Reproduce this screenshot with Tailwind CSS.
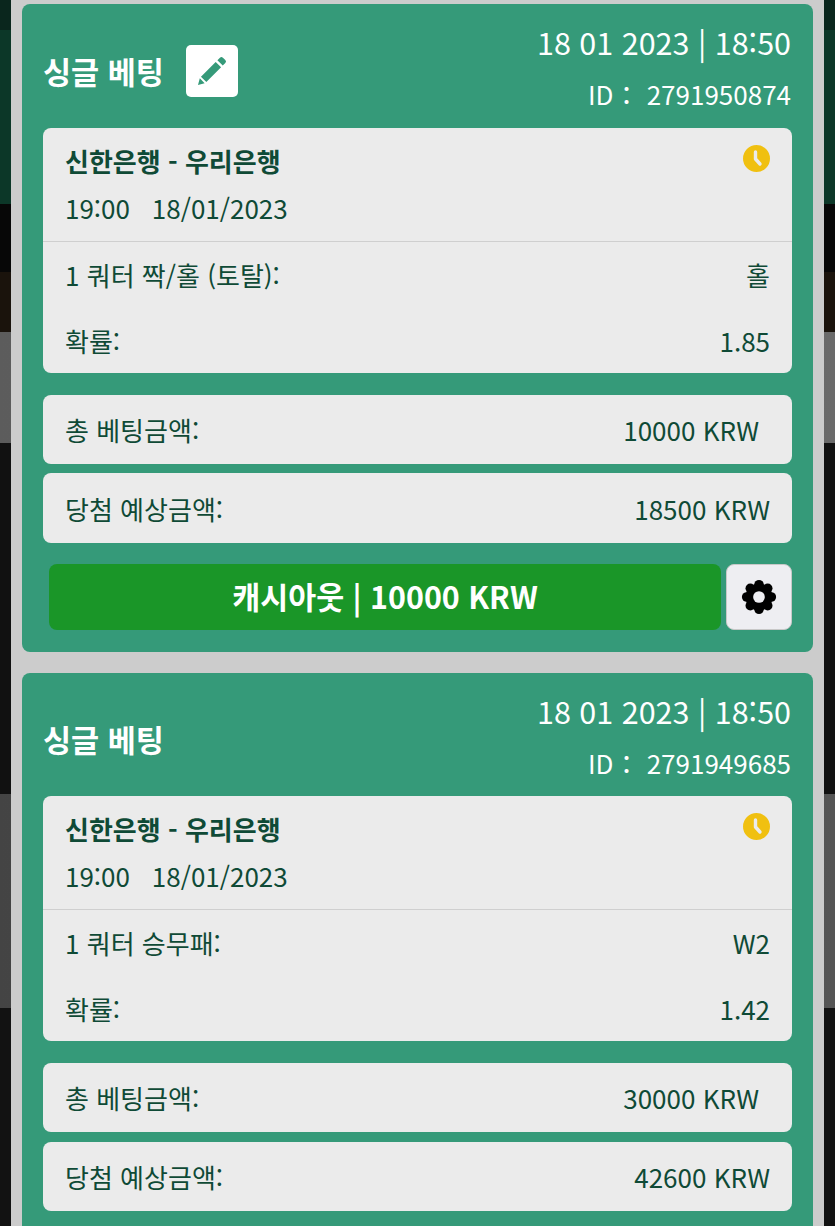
<!DOCTYPE html>
<html lang="ko">
<head>
  <meta charset="UTF-8" />
  <meta name="viewport" content="width=device-width, initial-scale=1" />
  <title>싱글 베팅</title>
  <script src="https://cdn.jsdelivr.net/npm/@tailwindcss/browser@4"></script>
</head>
<body class="h-[1226px] overflow-hidden bg-[#111111] font-['Noto_Sans_CJK_KR','Noto_Sans',sans-serif]">
  <div class="relative h-[1226px] overflow-hidden">
    <!-- page behind the modal, only its edges show -->
    <div class="absolute inset-0 flex flex-col">
      <div class="h-[30px] bg-[#0a261d]"></div>
      <div class="h-[174px] bg-[#0c3728]"></div>
      <div class="h-[68px] bg-[#070707]"></div>
      <div class="h-[60px] bg-[#1a130c]"></div>
      <div class="h-[111px] bg-gradient-to-r from-[#5c5c5c] to-[#6a6a6a]"></div>
      <div class="h-[351px] bg-[#111111]"></div>
      <div class="h-[214px] bg-gradient-to-r from-[#444444] to-[#555555]"></div>
      <div class="flex-1 bg-[#121212]"></div>
    </div>

    <div class="relative mx-[11px] h-full bg-[#cccccc] px-[11px] pt-1 flex flex-col gap-[21px]">
      <!-- first bet -->
      <section class="shrink-0 rounded-[8px] bg-[#359a79] px-[21px] pb-[22px]">
        <header class="flex h-[124px] justify-between">
          <div class="flex items-center gap-[22px] pt-[10px]">
            <h2 class="text-[30.5px] font-bold leading-none text-white">싱글 베팅</h2>
            <button class="flex h-[52px] w-[52px] items-center justify-center rounded-[5px] bg-white">
              <svg class="h-[34px] w-[34px] text-[#359a79]" viewBox="0 0 24 24" fill="currentColor"><path d="M17.6 2.6a1.5 1.5 0 0 1 2.1 0l1.7 1.7a1.5 1.5 0 0 1 0 2.1l-1.8 1.8-3.8-3.8zM14.6 5.6l3.8 3.8L8 19.8 4.2 16zM3.4 17.2l3.4 3.4-4.7 1.3z"/></svg>
            </button>
          </div>
          <div class="flex flex-col items-end pr-[1px] pt-[19px] text-white">
            <div class="text-[30.5px] leading-[38px]">18 01 2023 | 18:50</div>
            <div class="mt-[17px] text-[26px] leading-[32px]">ID： 2791950874</div>
          </div>
        </header>

        <div class="overflow-hidden rounded-[8px] bg-[#ebebeb] text-[#0f4a36]">
          <div class="relative h-[114px] border-b border-[#cfcfcf] pl-[22px] pr-[22px] pt-[11px]">
            <div class="text-[26px] font-bold leading-[44px]">신한은행 - 우리은행</div>
            <div class="mt-[5px] text-[26px] leading-[40px]">19:00 &nbsp; 18/01/2023</div>
            <svg class="absolute right-[22px] top-[17px] h-[27px] w-[27px]" viewBox="0 0 27 27"><circle cx="13.5" cy="13.5" r="13.5" fill="#f0c010"/><path d="M12.5 7v7l4.5 5" fill="none" stroke="#ebebeb" stroke-width="3.4" stroke-linecap="round" stroke-linejoin="round"/></svg>
          </div>
          <div class="flex h-[65px] items-center justify-between pl-[22px] pr-[22px] text-[26px]"><span>1 쿼터 짝/홀 (토탈):</span><span>홀</span></div>
          <div class="flex h-[66px] items-center justify-between pl-[22px] pr-[22px] text-[26px]"><span>확률:</span><span>1.85</span></div>
        </div>

        <div class="mt-[22px] flex h-[69px] items-center justify-between rounded-[8px] bg-[#ebebeb] pl-[22px] pr-[33px] text-[26px] text-[#0f4a36]"><span>총 베팅금액:</span><span>10000 KRW</span></div>
        <div class="mt-[9px] flex h-[70px] items-center justify-between rounded-[8px] bg-[#ebebeb] pl-[22px] pr-[22px] text-[26px] text-[#0f4a36]"><span>당첨 예상금액:</span><span>18500 KRW</span></div>

        <div class="mt-[21px] flex items-center gap-[5px] pl-[6px]">
          <button class="flex h-[66px] flex-1 items-center justify-center rounded-[8px] bg-[#1a9628] text-[30.4px] font-bold text-white">캐시아웃 | 10000 KRW</button>
          <button class="flex h-[66px] w-[66px] items-center justify-center rounded-[8px] border border-[#c8c8c8] bg-[#eeeef2]">
            <svg class="h-[36px] w-[36px]" viewBox="0 0 24 24" fill="#000000">
              <circle cx="12" cy="12" r="9"/>
              <circle cx="12" cy="3.8" r="3.2"/><circle cx="12" cy="20.2" r="3.2"/><circle cx="3.8" cy="12" r="3.2"/><circle cx="20.2" cy="12" r="3.2"/>
              <circle cx="6.2" cy="6.2" r="3.2"/><circle cx="17.8" cy="6.2" r="3.2"/><circle cx="6.2" cy="17.8" r="3.2"/><circle cx="17.8" cy="17.8" r="3.2"/>
              <circle cx="12" cy="12" r="3.9" fill="#eeeef2"/>
            </svg>
          </button>
        </div>
      </section>

      <!-- second bet -->
      <section class="shrink-0 rounded-[8px] bg-[#359a79] px-[21px] pb-[22px]">
        <header class="flex h-[123px] justify-between">
          <div class="flex items-center pt-[10px]">
            <h2 class="text-[30.5px] font-bold leading-none text-white">싱글 베팅</h2>
          </div>
          <div class="flex flex-col items-end pr-[1px] pt-[19px] text-white">
            <div class="text-[30.5px] leading-[38px]">18 01 2023 | 18:50</div>
            <div class="mt-[17px] text-[26px] leading-[32px]">ID： 2791949685</div>
          </div>
        </header>

        <div class="overflow-hidden rounded-[8px] bg-[#ebebeb] text-[#0f4a36]">
          <div class="relative h-[114px] border-b border-[#cfcfcf] pl-[22px] pr-[22px] pt-[11px]">
            <div class="text-[26px] font-bold leading-[44px]">신한은행 - 우리은행</div>
            <div class="mt-[5px] text-[26px] leading-[40px]">19:00 &nbsp; 18/01/2023</div>
            <svg class="absolute right-[22px] top-[17px] h-[27px] w-[27px]" viewBox="0 0 27 27"><circle cx="13.5" cy="13.5" r="13.5" fill="#f0c010"/><path d="M12.5 7v7l4.5 5" fill="none" stroke="#ebebeb" stroke-width="3.4" stroke-linecap="round" stroke-linejoin="round"/></svg>
          </div>
          <div class="flex h-[65px] items-center justify-between pl-[22px] pr-[22px] text-[26px]"><span>1 쿼터 승무패:</span><span>W2</span></div>
          <div class="flex h-[66px] items-center justify-between pl-[22px] pr-[22px] text-[26px]"><span>확률:</span><span>1.42</span></div>
        </div>

        <div class="mt-[22px] flex h-[69px] items-center justify-between rounded-[8px] bg-[#ebebeb] pl-[22px] pr-[33px] text-[26px] text-[#0f4a36]"><span>총 베팅금액:</span><span>30000 KRW</span></div>
        <div class="mt-[10px] flex h-[69px] items-center justify-between rounded-[8px] bg-[#ebebeb] pl-[22px] pr-[22px] text-[26px] text-[#0f4a36]"><span>당첨 예상금액:</span><span>42600 KRW</span></div>
      </section>
    </div>
  </div>
</body>
</html>
